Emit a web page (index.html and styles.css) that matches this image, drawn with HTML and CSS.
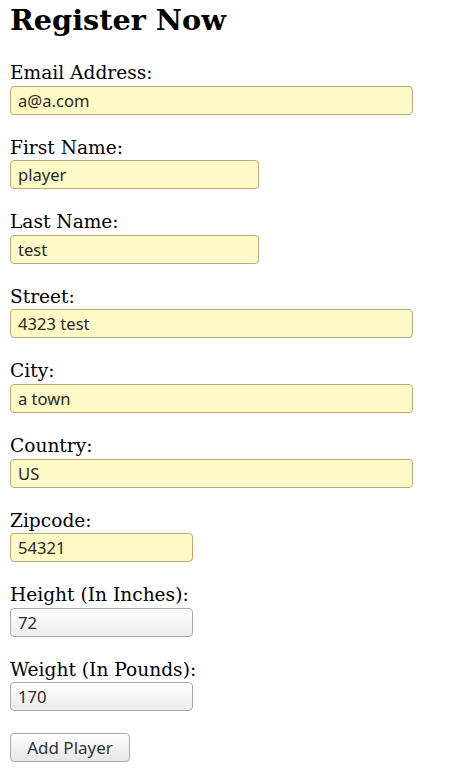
FILE: index.html
```html
<!DOCTYPE html>
<html>
<head>
<meta charset="utf-8">
<link rel="stylesheet" href="styles.css">
</head>
<body>
<h1 class="title">Register Now</h1>
<form class="form">
  <div class="field"><label class="label">Email Address:</label><input class="input auto wide" value="a@a.com"></div>
  <div class="field"><label class="label">First Name:</label><input class="input auto mid" value="player"></div>
  <div class="field"><label class="label">Last Name:</label><input class="input auto mid" value="test"></div>
  <div class="field"><label class="label">Street:</label><input class="input auto wide" value="4323 test"></div>
  <div class="field"><label class="label">City:</label><input class="input auto wide" value="a town"></div>
  <div class="field"><label class="label">Country:</label><input class="input auto wide" value="US"></div>
  <div class="field"><label class="label">Zipcode:</label><input class="input auto short" value="54321"></div>
  <div class="field"><label class="label">Height (In Inches):</label><input class="input plain short" value="72"></div>
  <div class="field"><label class="label">Weight (In Pounds):</label><input class="input plain short" value="170"></div>
  <div class="actions"><button type="button" class="button">Add Player</button></div>
</form>
</body>
</html>
```
FILE: styles.css
```css
html, body { margin: 0; padding: 0; background: #fff; }
body { padding: 0 10px; font-family: "DejaVu Serif", serif; color: #000; }
.title { margin: 0; font-size: 28.7px; font-weight: bold; line-height: 33px; padding-top: 4px; }
.form { display: flex; flex-direction: column; padding-top: 23px; gap: 20px; }
.field { display: flex; flex-direction: column; align-items: flex-start; }
.label { font-size: 18.6px; line-height: 25.6px; }
.input {
  box-sizing: border-box; height: 29px; margin: 0; padding: 0 7px;
  font-family: "Noto Sans", "DejaVu Sans", sans-serif; font-size: 16.6px; color: #2a2a2a;
  border: 1px solid #aaa; border-radius: 4px; outline: none;
}
.auto { background: #fff9c6; border-color: #c4a874; }
.plain { background: linear-gradient(#fff, #ececec); border-color: #aaa; }
.wide { width: 403px; }
.mid { width: 249px; }
.short { width: 183px; }
.actions { display: flex; margin-top: 2px; }
.button {
  box-sizing: border-box; height: 29px; width: 120px; padding: 0 10px;
  font-family: "Noto Sans", "DejaVu Sans", sans-serif; font-size: 17px; color: #333;
  background: linear-gradient(#fff, #e6e6e6); border: 1px solid #aaa; border-radius: 4px;
}
```
